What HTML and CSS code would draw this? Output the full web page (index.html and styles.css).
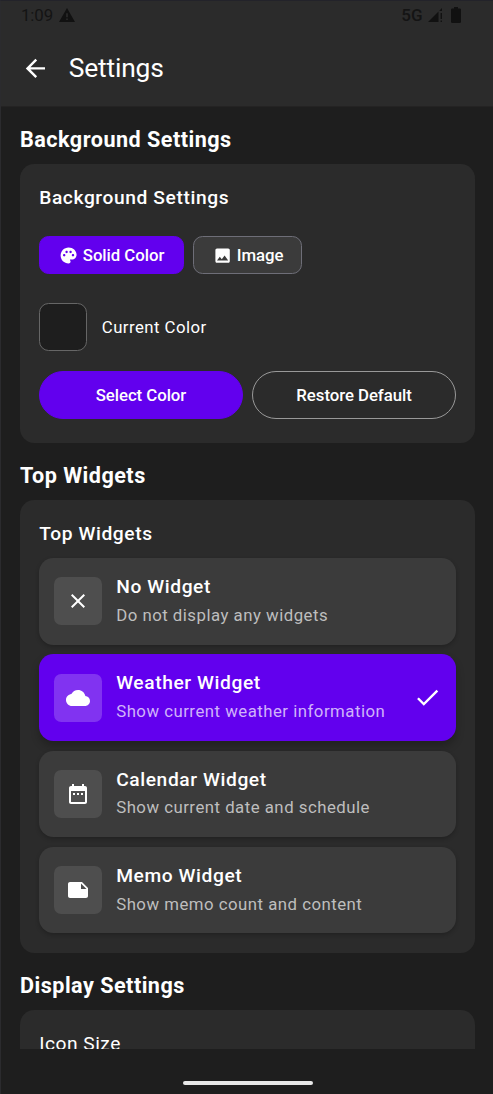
FILE: index.html
```html
<!DOCTYPE html>
<html lang="en">
<head>
<meta charset="utf-8">
<title>Settings</title>
<link rel="stylesheet" href="styles.css">
</head>
<body>
<div class="screen">
  <header class="header">
    <div class="status">
      <span class="clock">1:09</span>
      <svg class="warn" viewBox="0 0 16 14"><path fill-rule="evenodd" d="M8 0 16 14H0ZM7.2 5.2v4h1.6v-4ZM7.2 10.4V12h1.6v-1.6Z"/></svg>
      <span class="network">5G</span>
      <svg class="signal" viewBox="0 0 15 14"><path d="M0 14 10.5 3.5V14ZM11.5 2.5 14 0v3h-2.5ZM12.6 5H14v6h-1.4ZM12.6 12.4H14V14h-1.4Z"/></svg>
      <svg class="battery" viewBox="0 0 10 16"><path d="M3 0h4v1.6h1.8Q10 1.6 10 2.8v12Q10 16 8.800 16H1.200Q0 16 0 14.800v-12Q0 1.600 1.200 1.600H3Z"/></svg>
    </div>
    <div class="appbar">
      <svg class="back" viewBox="0 0 24 24"><path d="M20 11H7.830l5.590-5.590L12 4l-8 8 8 8 1.410-1.410L7.830 13H20v-2z"/></svg>
      <h1 class="page-title">Settings</h1>
    </div>
  </header>
  <main class="content">
    <h2 class="section-title">Background Settings</h2>
    <section class="card card-background">
      <h3 class="card-title">Background Settings</h3>
      <div class="chips">
        <button class="chip chip-on"><svg class="chip-icon" viewBox="0 0 24 24"><path d="M12 2C6.490 2 2 6.490 2 12s4.490 10 10 10c1.380 0 2.500-1.120 2.500-2.500 0-.610-.230-1.200-.640-1.670-.080-.100-.130-.210-.130-.330 0-.280.220-.500.500-.500H16c3.310 0 6-2.690 6-6 0-4.960-4.490-9-10-9zm5.500 11c-.830 0-1.500-.670-1.500-1.500s.670-1.500 1.500-1.500 1.500.670 1.500 1.500-.670 1.500-1.500 1.500zm-3-4c-.830 0-1.500-.670-1.500-1.500S13.670 6 14.500 6s1.500.670 1.500 1.500S15.330 9 14.500 9zM5 11.500c0-.830.670-1.500 1.500-1.500s1.500.670 1.500 1.500S7.330 13 6.500 13 5 12.330 5 11.500zm6-4c0 .830-.670 1.500-1.500 1.500S8 8.330 8 7.500 8.670 6 9.500 6s1.500.670 1.500 1.500z"/></svg><span class="label">Solid Color</span></button>
        <button class="chip chip-image"><svg class="chip-icon" viewBox="0 0 24 24"><path d="M21 19V5c0-1.100-.900-2-2-2H5c-1.100 0-2 .900-2 2v14c0 1.100.900 2 2 2h14c1.100 0 2-.900 2-2zM8.500 13.500l2.500 3.010L14.500 12l4.500 6H5l3.500-4.500z"/></svg><span class="label">Image</span></button>
      </div>
      <div class="current"><span class="swatch"></span><span class="current-text">Current Color</span></div>
      <div class="actions">
        <button class="action action-fill"><span class="label">Select Color</span></button>
        <button class="action"><span class="label">Restore Default</span></button>
      </div>
    </section>

    <h2 class="section-title">Top Widgets</h2>
    <section class="card card-widgets">
      <h3 class="card-title">Top Widgets</h3>
      <div class="widgets">
        <div class="widget">
          <span class="tile"><svg class="tile-icon" viewBox="0 0 24 24"><path d="M19 6.410 17.590 5 12 10.590 6.410 5 5 6.410 10.590 12 5 17.590 6.410 19 12 13.410 17.590 19 19 17.590 13.410 12z"/></svg></span>
          <div class="texts"><div class="name">No Widget</div><div class="desc">Do not display any widgets</div></div>
        </div>
        <div class="widget widget-on">
          <span class="tile"><svg class="tile-icon" viewBox="0 0 24 24"><path d="M19.350 10.040C18.670 6.590 15.640 4 12 4 9.110 4 6.600 5.640 5.350 8.040 2.340 8.360 0 10.910 0 14c0 3.310 2.690 6 6 6h13c2.760 0 5-2.240 5-5 0-2.640-2.050-4.780-4.650-4.960z"/></svg></span>
          <div class="texts"><div class="name">Weather Widget</div><div class="desc">Show current weather information</div></div>
          <svg class="check" viewBox="0 0 24 24"><path d="M9 16.170 4.830 12l-1.420 1.410L9 19 21 7l-1.410-1.410z"/></svg>
        </div>
        <div class="widget">
          <span class="tile"><svg class="tile-icon" viewBox="0 0 24 24"><path d="M9 11H7v2h2v-2zm4 0h-2v2h2v-2zm4 0h-2v2h2v-2zm2-7h-1V2h-2v2H8V2H6v2H5c-1.110 0-1.990.900-1.990 2L3 20c0 1.100.890 2 2 2h14c1.100 0 2-.900 2-2V6c0-1.100-.900-2-2-2zm0 16H5V9h14v11z"/></svg></span>
          <div class="texts"><div class="name">Calendar Widget</div><div class="desc">Show current date and schedule</div></div>
        </div>
        <div class="widget">
          <span class="tile"><svg class="tile-icon" viewBox="0 0 24 24"><path fill-rule="evenodd" d="M4 4C2.900 4 2 4.900 2 6v12.010c0 1.100.900 1.990 2 1.990h16c1.100 0 2-.900 2-2v-8l-6-6H4zm11 1.500 5.500 5.500H15V5.500z"/></svg></span>
          <div class="texts"><div class="name">Memo Widget</div><div class="desc">Show memo count and content</div></div>
        </div>
      </div>
    </section>

    <h2 class="section-title">Display Settings</h2>
    <section class="card card-display">
      <h3 class="card-title card-title-regular">Icon Size</h3>
    </section>
  </main>
  <footer class="navbar"><span class="handle"></span></footer>
</div>
</body>
</html>
```

FILE: styles.css
```css
* { box-sizing: border-box; }
body { margin: 0; background: #1e1e1e; color: #fff; font-family: Roboto, "Liberation Sans", sans-serif; }
h1, h2, h3 { margin: 0; }
svg { display: block; flex: none; fill: #fff; }
.screen {
  width: 493px; height: 1094px; overflow: hidden;
  display: flex; flex-direction: column;
  border-left: 1px solid #2b2b2e; border-top: 1px solid #23232a;
}
.header { flex: none; height: 106px; background: #2b2b2b; border-bottom: 1px solid #242323; }
.status { display: flex; align-items: center; height: 28px; padding: 0 32.5px 0 20px; color: #141414; font-size: 16.8px; line-height: 28px; }
.status svg { fill: #111; }
.clock { width: 33px; letter-spacing: -0.1px; }
.warn { width: 16px; height: 14px; margin-left: 5px; }
.network { margin-left: auto; font-size: 17px; font-weight: 500; }
.signal { width: 15px; height: 14px; margin-left: 5px; }
.battery { width: 10px; height: 16px; margin-left: 8px; }
.appbar { display: flex; align-items: center; height: 60px; margin-top: 9px; padding-left: 20px; gap: 19px; }
.back { width: 28.8px; height: 28.8px; }
.page-title { font-size: 26.4px; font-weight: 400; line-height: 34px; letter-spacing: -0.2px; }

.content { flex: none; height: 942px; overflow: hidden; padding: 19px 18px 0 19px; }
.section-title { height: 28px; margin-bottom: 10px; font-size: 21.6px; line-height: 28px; font-weight: 700; letter-spacing: 0.48px; white-space: nowrap; }
.card { background: #2b2b2b; border-radius: 14.4px; padding: 19px 19.200px 0; margin-bottom: 19px; }
.card-background { height: 279px; }
.card-widgets { height: 453px; }
.card-display { height: 90px; margin-bottom: 0; }
.card-title { font-size: 19.2px; line-height: 29px; font-weight: 500; letter-spacing: 0.6px; }
.card-title-regular { font-weight: 400; letter-spacing: 0.5px; }

button { font: inherit; color: #fff; margin: 0; padding: 0; }
.label { font-size: 16.8px; font-weight: 500; letter-spacing: -0.05px; white-space: nowrap; }
.chips { display: flex; gap: 9.600px; margin-top: 24px; }
.chip { display: flex; align-items: center; height: 38.4px; width: 109px; padding-left: 18.4px; gap: 5px; border: 1.2px solid #6e6e78; border-radius: 9.600px; background: #3b3b3b; }
.chip-on { width: 144.4px; background: #6200ee; border-color: #6200ee; }
.chip-icon { width: 19.200px; height: 19.200px; }
.current { display: flex; align-items: center; gap: 14.6px; margin-top: 28.6px; }
.swatch { width: 48px; height: 48px; background: #1e1e1e; border: 1.2px solid #666; border-radius: 9.600px; }
.current-text { font-size: 16.8px; letter-spacing: 0.45px; }
.actions { display: flex; gap: 9.600px; margin-top: 20px; }
.action { flex: 1; height: 48px; border: 1.2px solid #999; border-radius: 24px; background: transparent; }
.action-fill { background: #6200ee; border-color: #6200ee; }

.widgets { display: flex; flex-direction: column; gap: 9.700px; margin-top: 10px; }
.widget { display: flex; align-items: center; height: 86.6px; padding: 0 14.4px; border-radius: 14.4px; background: #3b3b3b; box-shadow: 0 2px 4px rgba(0,0,0,.22); }
.widget-on { background: #6200ee; box-shadow: 0 5px 9px rgba(0,0,0,.24); }
.tile { display: flex; align-items: center; justify-content: center; flex: none; width: 48px; height: 48px; border-radius: 7.200px; background: #4e4e4e; }
.widget-on .tile { background: #8133f1; }
.tile-icon { width: 24px; height: 24px; }
.texts { flex: 1; margin-left: 14.6px; padding-bottom: 3.5px; white-space: nowrap; }
.name { font-size: 19.2px; line-height: 29px; font-weight: 500; letter-spacing: 0.6px; }
.desc { font-size: 16.8px; line-height: 24px; margin-top: 1.7px; letter-spacing: 0.49px; color: #bebebe; }
.widget-on .desc { color: #d0b3fa; }
.check { width: 28.8px; height: 28.8px; }
.navbar { flex: none; height: 45px; display: flex; justify-content: center; padding: 31.5px 0 0 1px; }
.handle { width: 130px; height: 4.6px; border-radius: 2.3px; background: #e8e8e8; }
```
